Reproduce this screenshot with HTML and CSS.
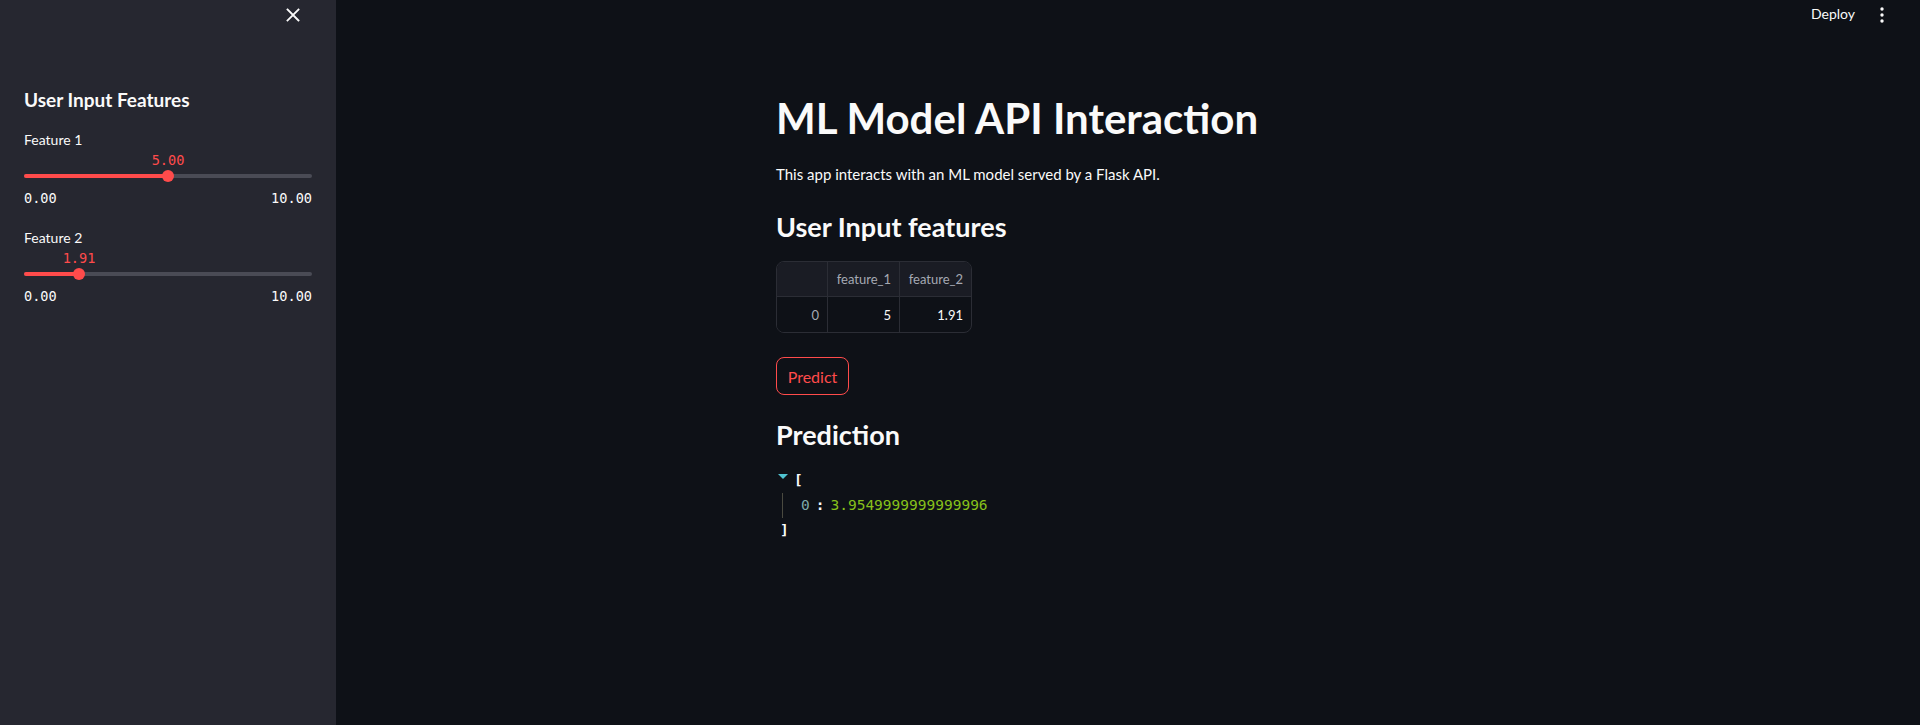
FILE: index.html
```html
<!DOCTYPE html>
<html>
<head>
<meta charset="utf-8">
<link rel="stylesheet" href="styles.css">
</head>
<body>
<div class="app">
  <aside class="sidebar">
    <div class="side-top">
      <svg class="close" width="14" height="14" viewBox="0 0 14 14"><path d="M1.5 1.5 L12.5 12.5 M12.5 1.5 L1.5 12.5" stroke="#fafafa" stroke-width="1.8" stroke-linecap="square"/></svg>
    </div>
    <h2 class="side-title">User Input Features</h2>
    <div class="slider s1">
      <div class="label">Feature 1</div>
      <div class="value-row"><span class="value" style="left:50%">5.00</span></div>
      <div class="track"><div class="fill" style="width:50%"></div><div class="thumb" style="left:50%"></div></div>
      <div class="ticks"><span>0.00</span><span>10.00</span></div>
    </div>
    <div class="slider s2">
      <div class="label">Feature 2</div>
      <div class="value-row"><span class="value" style="left:19.1%">1.91</span></div>
      <div class="track"><div class="fill" style="width:19.1%"></div><div class="thumb" style="left:19.1%"></div></div>
      <div class="ticks"><span>0.00</span><span>10.00</span></div>
    </div>
  </aside>
  <main class="main">
    <header class="topbar">
      <span class="deploy">Deploy</span>
      <svg class="dots" width="4" height="16" viewBox="0 0 4 16"><circle cx="2" cy="2" r="1.7" fill="#fafafa"/><circle cx="2" cy="8" r="1.7" fill="#fafafa"/><circle cx="2" cy="14" r="1.7" fill="#fafafa"/></svg>
    </header>
    <div class="content">
      <h1 class="title">ML Model API Interaction</h1>
      <p class="intro">This app interacts with an ML model served by a Flask API.</p>
      <h3 class="sub">User Input features</h3>
      <table class="df">
        <thead><tr><th class="idx"></th><th>feature_1</th><th>feature_2</th></tr></thead>
        <tbody><tr><td class="idx">0</td><td>5</td><td>1.91</td></tr></tbody>
      </table>
      <button class="predict">Predict</button>
      <h3 class="sub pred">Prediction</h3>
      <div class="json">
        <div class="jline"><span class="caret"></span><span class="br">[</span></div>
        <div class="jbody"><div class="jline"><span class="key">0</span><span class="colon">:</span><span class="num">3.9549999999999996</span></div></div>
        <div class="jline end"><span class="br">]</span></div>
      </div>
    </div>
  </main>
</div>
</body>
</html>
```
FILE: styles.css
```css
* { box-sizing: border-box; }
html, body { margin: 0; padding: 0; }
body {
  background: #0e1117;
  color: #fafafa;
  font-family: Lato, "Noto Sans", sans-serif;
  width: 1920px;
  height: 725px;
  overflow: hidden;
}
.app { display: flex; height: 725px; }
.sidebar {
  width: 336px;
  flex: none;
  background: #262730;
  padding: 0 24px;
}
.side-top {
  height: 30px;
  display: flex;
  justify-content: flex-end;
  align-items: center;
  padding-right: 12px;
}
.close { display: block; }
.side-title {
  margin: 55px 0 0;
  font-size: 19px;
  line-height: 30px;
  font-weight: 700;
}
.slider { font-size: 14px; }
.label { line-height: 20px; }
.s1 { margin-top: 15px; }
.s2 { margin-top: 22px; }
.value-row { position: relative; height: 16px; margin-top: 2px; width: 288px; }
.value {
  position: absolute;
  top: 0;
  transform: translateX(-50%);
  font-family: "DejaVu Sans Mono", monospace;
  font-size: 13.6px;
  line-height: 16px;
  color: #ff4b4b;
}
.track {
  position: relative;
  height: 4px;
  margin: 6px 0 0;
  background: #4a4b55;
  border-radius: 2px;
  width: 288px;
}
.fill { height: 4px; background: #ff4b4b; border-radius: 2px; }
.thumb {
  position: absolute;
  top: -4px;
  width: 12px;
  height: 12px;
  margin-left: -6px;
  border-radius: 50%;
  background: #ff4b4b;
}
.ticks {
  display: flex;
  justify-content: space-between;
  width: 288px;
  margin-top: 12px;
  font-family: "DejaVu Sans Mono", monospace;
  font-size: 13.6px;
  line-height: 16px;
  color: #fafafa;
}
.main { flex: 1; display: flex; flex-direction: column; }
.topbar {
  height: 60px;
  display: flex;
  justify-content: flex-end;
  align-items: flex-start;
  padding: 4px 36px 0 0;
  gap: 25px;
}
.deploy { font-size: 14px; line-height: 20px; }
.dots { margin-top: 3px; }
.content { width: 704px; margin: 0 auto; }
.title {
  margin: 28px 0 0;
  font-size: 42px;
  line-height: 60px;
  font-weight: 700;
}
.intro { margin: 14px 0 0; font-size: 15px; line-height: 24px; }
.sub { margin: 21px 0 0; font-size: 27px; line-height: 40px; font-weight: 700; }
.df {
  margin-top: 14px;
  border-collapse: separate;
  border-spacing: 0;
  border: 1px solid #2b2d35;
  border-radius: 8px;
  overflow: hidden;
  font-size: 13px;
  table-layout: fixed;
  width: 196px;
}
.df th, .df td {
  height: 35px;
  padding: 0 8px;
  text-align: right;
  border-right: 1px solid #2b2d35;
  white-space: nowrap;
}
.df th:last-child, .df td:last-child { border-right: none; }
.df th { background: #1a1c24; color: #a5a9b3; font-weight: 400; border-bottom: 1px solid #2b2d35; }
.df td { color: #fafafa; }
.df .idx { width: 51px; color: #a5a9b3; background: #1a1c24; }
.df td.idx { background: #0e1117; }
.df th:nth-child(2) { width: 72px; }
.predict {
  display: block;
  margin-top: 24px;
  width: 73px;
  height: 38px;
  background: transparent;
  border: 1px solid #ff4b4b;
  border-radius: 8px;
  color: #ff4b4b;
  font-family: inherit;
  font-size: 16px;
}
.pred { margin-top: 20px; }
.json {
  margin-top: 13px;
  font-family: "DejaVu Sans Mono", monospace;
  font-size: 14.5px;
}
.jline { display: flex; align-items: center; line-height: 25px; height: 25px; }
.caret {
  width: 0; height: 0;
  border-left: 5px solid transparent;
  border-right: 5px solid transparent;
  border-top: 5px solid #4fc3d1;
  margin: 0 6px 0 2px;
  position: relative; top: -4px;
}
.br { color: #fafafa; font-weight: 700; }
.jbody { margin-left: 6px; padding-left: 18px; border-left: 1px solid #4a4a40; }
.key { color: #7ea9a9; }
.colon { color: #fafafa; margin: 0 6px; font-weight: 700; }
.num { color: #87c11b; }
.end { padding-left: 4px; }
```
